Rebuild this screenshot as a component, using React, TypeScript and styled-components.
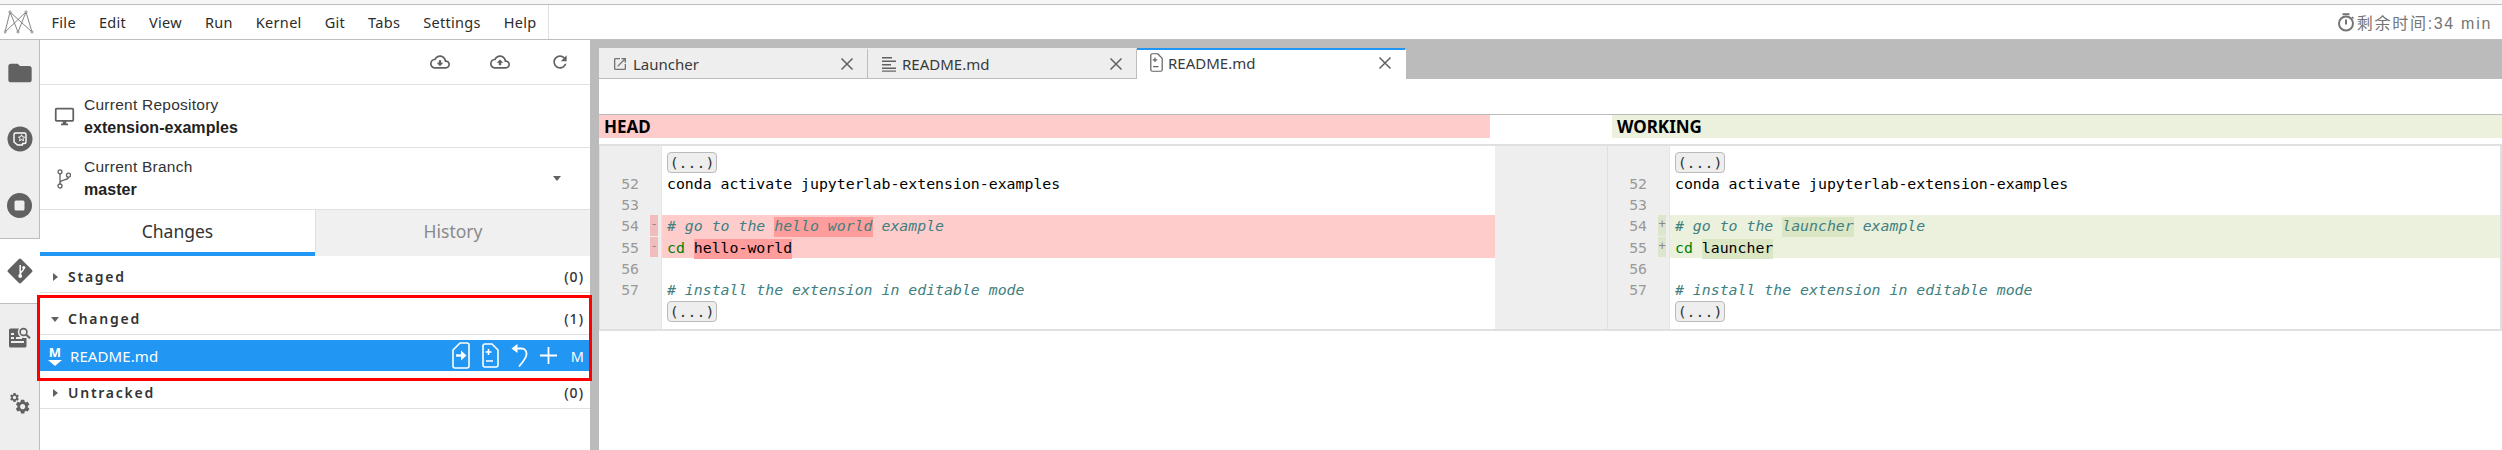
import React from 'react';
import styled, { createGlobalStyle } from 'styled-components';

const Global = createGlobalStyle`
  html, body { margin: 0; padding: 0; background: #fff; }
  #root { width: 2502px; height: 450px; overflow: hidden; }
  * { box-sizing: border-box; }
`;

const Page = styled.div`
  width: 2502px;
  height: 450px;
  display: flex;
  flex-direction: column;
  font-family: "Noto Sans", sans-serif;
  color: #333;
`;
const TopEdge = styled.div`
  height: 5px;
  background: #f6f6f6;
  border-bottom: 1px solid #bdbdbd;
`;
const MenuBar = styled.div`
  height: 35px;
  display: flex;
  align-items: stretch;
  border-bottom: 1px solid #bdbdbd;
`;
const Logo = styled.svg`
  width: 30px;
  height: 24px;
  margin: 5px 6px 0 4px;
`;
const MenuList = styled.div`
  display: flex;
  align-items: center;
  border-right: 1px solid #e0e0e0;
`;
const MenuItem = styled.div`
  padding: 0 11.5px;
  font-size: 14.5px;
  letter-spacing: 0.3px;
  color: #2c2c2c;
`;
const Timer = styled.div`
  margin-left: auto;
  padding-right: 10px;
  display: flex;
  align-items: center;
  gap: 2px;
  color: #757575;
  font-family: "Liberation Sans", "Noto Sans CJK SC", sans-serif;
  font-size: 16px;
  letter-spacing: 1.7px;
`;
const Body = styled.div`
  flex: 1;
  min-height: 0;
  display: flex;
`;
const Strip = styled.div`
  width: 40px;
  background: #eee;
  border-right: 1px solid #bdbdbd;
  display: flex;
  flex-direction: column;
`;
const StripTab = styled.div<{ $active?: boolean }>`
  height: 66px;
  display: flex;
  align-items: center;
  justify-content: center;
  color: #616161;
  ${(p) =>
    p.$active
      ? 'background:#fff;width:40px;border-top:1px solid #bdbdbd;border-bottom:1px solid #bdbdbd;'
      : ''}
`;
const Panel = styled.div`
  position: relative;
  width: 550px;
  display: flex;
  flex-direction: column;
  background: #fff;
`;
const PanelToolbar = styled.div`
  height: 45px;
  display: flex;
  align-items: flex-start;
  justify-content: flex-end;
  gap: 40px;
  padding: 12px 20px 0 0;
  border-bottom: 1px solid #e0e0e0;
  color: #616161;
`;
const InfoRow = styled.div<{ $h: number }>`
  height: ${(p) => p.$h}px;
  display: flex;
  align-items: center;
  border-bottom: 1px solid #e0e0e0;
  color: #616161;
`;
const InfoIcon = styled.div`
  width: 44px;
  display: flex;
  justify-content: center;
  padding-left: 4px;
`;
const InfoText = styled.div`
  flex: 1;
  display: flex;
  flex-direction: column;
  gap: 5px;
  font-family: "Liberation Sans", sans-serif;
`;
const InfoLabel = styled.div`
  font-size: 15.5px;
  line-height: 18px;
  letter-spacing: 0.25px;
  color: #333;
`;
const InfoValue = styled.div`
  font-size: 16px;
  line-height: 18px;
  font-weight: 700;
  letter-spacing: 0.05px;
  color: #222;
`;
const Caret = styled.div`
  width: 0;
  height: 0;
  border-left: 4px solid transparent;
  border-right: 4px solid transparent;
  border-top: 5px solid #616161;
  margin-right: 29px;
`;
const TabRow = styled.div`
  height: 46px;
  display: flex;
`;
const PanelTab = styled.div<{ $active?: boolean }>`
  width: 50%;
  display: flex;
  align-items: center;
  justify-content: center;
  font-size: 17.5px;
  background: ${(p) => (p.$active ? '#fff' : '#f0f0f0')};
  color: ${(p) => (p.$active ? '#333' : '#8a8a8a')};
  border-bottom: 4px solid ${(p) => (p.$active ? '#2196f3' : '#f0f0f0')};
  ${(p) => (p.$active ? '' : 'border-left:1px solid #e0e0e0;')}
`;
const SectionHead = styled.div<{ $h: number }>`
  height: ${(p) => p.$h}px;
  display: flex;
  align-items: flex-end;
  padding: 0 6px 5px 11px;
  border-bottom: 1px solid #e0e0e0;
  font-size: 14px;
  font-weight: 600;
  line-height: 20px;
`;
const Arrow = styled.div<{ $open?: boolean }>`
  width: 17px;
  height: 20px;
  display: flex;
  align-items: center;
  &::before {
    content: '';
    margin-left: ${(p) => (p.$open ? '0' : '2px')};
    border-style: solid;
    border-color: transparent;
    ${(p) =>
      p.$open
        ? 'border-width:5px 4px 0 4px;border-top-color:#616161;'
        : 'border-width:4px 0 4px 5px;border-left-color:#616161;'}
  }
`;
const SectionName = styled.div`
  flex: 1;
  letter-spacing: 1.75px;
  color: #333;
`;
const SectionCount = styled.div`
  font-weight: 500;
  letter-spacing: 1px;
  color: #333;
`;
const FileRow = styled.div`
  margin-top: 5px;
  height: 31px;
  background: #2196f3;
  color: #fff;
  display: flex;
  align-items: center;
  padding: 0 6px 0 8px;
`;
const FileName = styled.div`
  flex: 1;
  margin-left: 8px;
  font-size: 15px;
  letter-spacing: 0.1px;
`;
const FileActions = styled.div`
  display: flex;
  align-items: center;
  gap: 12px;
`;
const FileStatus = styled.div`
  font-size: 14.5px;
  margin-left: 2px;
`;
const RedBox = styled.div`
  position: absolute;
  left: -3px;
  top: 255px;
  width: 555px;
  height: 86px;
  border: 3px solid #f00;
  pointer-events: none;
`;
const Workspace = styled.div`
  flex: 1;
  min-width: 0;
  display: flex;
  flex-direction: column;
  background: #bbb;
  padding-left: 9px;
`;
const DockTabs = styled.div`
  height: 39px;
  padding-top: 8px;
  display: flex;
  align-items: stretch;
`;
const DockTab = styled.div<{ $active?: boolean }>`
  width: 269px;
  display: flex;
  align-items: center;
  padding: ${(p) => (p.$active ? '0 13px 3px 13px' : '0 13px 0 13px')};
  gap: 5px;
  font-size: 15px;
  background: ${(p) => (p.$active ? '#fff' : '#eee')};
  color: #333;
  border-top: 2px solid ${(p) => (p.$active ? '#2196f3' : '#eee')};
  border-right: 1px solid ${(p) => (p.$active ? '#fff' : '#bdbdbd')};
  border-bottom: 1px solid ${(p) => (p.$active ? '#fff' : '#bdbdbd')};
`;
const DockLabel = styled.div`
  flex: 1;
  color: #3a3a3a;
`;
const DiffArea = styled.div`
  flex: 1;
  background: #fff;
  padding-top: 35px;
  min-height: 0;
`;
const DiffHeads = styled.div`
  height: 24px;
  display: flex;
  justify-content: space-between;
  border-top: 1px solid #bbb;
`;
const DiffHead = styled.div<{ $kind: 'old' | 'new'; $w: number }>`
  width: ${(p) => p.$w}px;
  background: ${(p) => (p.$kind === 'old' ? '#ffcccc' : '#ebf1dd')};
  font-size: 17px;
  font-weight: 700;
  color: #000;
  line-height: 23px;
  padding-left: 5px;
`;
const DiffBody = styled.div`
  margin-top: 6px;
  height: 187px;
  display: flex;
  border: 1px solid #e0e0e0;
  border-width: 2px 2px 2px 1px;
`;
const Pane = styled.div<{ $w?: number }>`
  width: ${(p) => (p.$w ? `${p.$w}px` : 'auto')};
  flex: ${(p) => (p.$w ? '0 0 auto' : '1')};
  display: flex;
  flex-direction: column;
  min-width: 0;
`;
const Spacer = styled.div`
  width: 113px;
  background: #eee;
  border-right: 1px solid #e0e0e0;
`;
const Line = styled.div<{ $h: number }>`
  height: ${(p) => p.$h}px;
  display: flex;
`;
const Gutter = styled.div`
  width: 62px;
  flex: none;
  background: #eee;
  border-right: 1px solid #e6e6e6;
  display: flex;
`;
const LineNo = styled.div`
  width: 39px;
  padding-top: 1px;
  text-align: right;
  font-family: "DejaVu Sans Mono", monospace;
  font-size: 14.85px;
  line-height: 21px;
  color: #999;
`;
const Marker = styled.div<{ $kind: 'old' | 'new' }>`
  margin: 0 0 1px 11px;
  width: 8px;
  background: ${(p) => (p.$kind === 'old' ? '#f0bcbc' : '#dde5cd')};
  font-family: "DejaVu Sans Mono", monospace;
  font-size: 12px;
  line-height: 19px;
  color: #888;
  text-align: center;
  overflow: hidden;
`;
const Code = styled.div<{ $kind?: 'old' | 'new' }>`
  flex: 1;
  min-width: 0;
  padding-left: 5px;
  font-family: "DejaVu Sans Mono", monospace;
  font-size: 14.85px;
  line-height: 21px;
  white-space: pre;
  color: #000;
  background: ${(p) => (p.$kind === 'old' ? '#ffcccc' : p.$kind === 'new' ? '#ebf1dd' : 'transparent')};
`;
const CodeText = styled.div`
  padding-top: 1px;
`;
const Comment = styled.span`
  font-style: italic;
  color: #408080;
`;
const Builtin = styled.span`
  color: #008000;
`;
const Mark = styled.span<{ $kind: 'old' | 'new' }>`
  display: inline-block;
  height: 20px;
  line-height: 19px;
  background: ${(p) => (p.$kind === 'old' ? '#ff9d9d' : '#dbe6c5')};
`;
const Fold = styled.button<{ $top: number }>`
  display: block;
  margin-top: ${(p) => p.$top}px;
  width: 50px;
  height: 21px;
  padding: 0;
  border: 1px solid #bbb;
  border-radius: 4px;
  background: #eee;
  font-family: "DejaVu Sans Mono", monospace;
  font-size: 14.85px;
  line-height: 18px;
  color: #333;
`;
const MarkdownGlyph = styled.svg`
  overflow: visible;
  flex: none;
`;

const Ic = ({ d, size = 20, color = 'currentColor' }: { d: string; size?: number; color?: string }) => (
  <svg width={size} height={size} viewBox="0 0 24 24" fill={color}>
    <path d={d} />
  </svg>
);

const gearPath =
  'M19.14 12.94c.04-.3.06-.61.06-.94 0-.32-.02-.64-.07-.94l2.03-1.58c.18-.14.23-.41.12-.61l-1.92-3.32c-.12-.22-.37-.29-.59-.22l-2.39.96c-.5-.38-1.03-.7-1.62-.94l-.36-2.54c-.04-.24-.24-.41-.48-.41h-3.84c-.24 0-.43.17-.47.41l-.36 2.54c-.59.24-1.13.57-1.62.94l-2.39-.96c-.22-.08-.47 0-.59.22L2.74 8.87c-.12.21-.08.47.12.61l2.03 1.58c-.05.3-.09.63-.09.94s.02.64.07.94l-2.03 1.58c-.18.14-.23.41-.12.61l1.92 3.32c.12.22.37.29.59.22l2.39-.96c.5.38 1.03.7 1.62.94l.36 2.54c.05.24.24.41.48.41h3.84c.24 0 .44-.17.47-.41l.36-2.54c.59-.24 1.13-.56 1.62-.94l2.39.96c.22.08.47 0 .59-.22l1.92-3.32c.12-.22.07-.47-.12-.61l-2.01-1.58zM12 15.6c-1.98 0-3.6-1.62-3.6-3.6s1.62-3.6 3.6-3.6 3.6 1.62 3.6 3.6-1.62 3.6-3.6 3.6z';
const cloudBase =
  'M19.35 10.04C18.67 6.59 15.64 4 12 4 9.11 4 6.6 5.64 5.35 8.04 2.34 8.36 0 10.91 0 14c0 3.31 2.69 6 6 6h13c2.76 0 5-2.24 5-5 0-2.64-2.05-4.78-4.65-4.96zM19 18H6c-2.21 0-4-1.79-4-4 0-2.05 1.53-3.76 3.56-3.97l1.07-.11.5-.95C8.08 7.14 9.94 6 12 6c2.62 0 4.88 1.86 5.39 4.43l.3 1.5 1.53.11c1.56.1 2.78 1.41 2.78 2.96 0 1.65-1.35 3-3 3z';

const JupyterMesh = () => {
  const nodes = [[6, 2], [22, 2], [1, 22], [14, 22], [28, 22]];
  const edges = [[0, 2], [0, 3], [0, 4], [1, 2], [1, 3], [1, 4]];
  return (
    <Logo viewBox="0 0 30 24">
      {edges.map(([a, b]) => (
        <line key={`${a}${b}`} x1={nodes[a][0]} y1={nodes[a][1]} x2={nodes[b][0]} y2={nodes[b][1]} stroke="#777" strokeWidth="0.9" />
      ))}
      {nodes.map(([x, y]) => (
        <circle key={`${x}${y}`} cx={x} cy={y} r="1.1" fill="#fff" stroke="#777" strokeWidth="0.8" />
      ))}
    </Logo>
  );
};

const ExtensionIcon = () => (
  <svg width="26" height="26" viewBox="0 0 26 26">
    <circle cx="13" cy="13" r="12.5" fill="#616161" />
    <path d="M7 8.5a1.5 1.5 0 0 1 1.5-1.5h9a1.5 1.5 0 0 1 1.5 1.5v7.5a1.5 1.5 0 0 1-1.5 1.5h-2v1.5h-5l-3.5-3z" fill="none" stroke="#fff" strokeWidth="1.4" strokeLinejoin="round" />
    <path d="M14.5 8.8l1 2 2.1.3-1.5 1.5.4 2.1-2-1-1.9 1 .4-2.1-1.5-1.5 2.1-.3z" fill="none" stroke="#fff" strokeWidth="1" />
  </svg>
);
const StopIcon = () => (
  <svg width="25" height="25" viewBox="0 0 25 25">
    <circle cx="12.5" cy="12.5" r="12.5" fill="#616161" />
    <rect x="7.5" y="7.5" width="10" height="10" rx="1.5" fill="#eee" />
  </svg>
);
const GitDiamond = () => (
  <svg width="26" height="26" viewBox="0 0 26 26">
    <path d="M1.2 11.7L11.7 1.2a1.8 1.8 0 0 1 2.6 0l10.5 10.5a1.8 1.8 0 0 1 0 2.6L14.3 24.8a1.8 1.8 0 0 1-2.6 0L1.2 14.3a1.8 1.8 0 0 1 0-2.6z" fill="#616161" />
    <path d="M13.2 7v10M13.2 16c0-2.5 3.6-2.2 3.6-6" stroke="#fff" strokeWidth="1.5" fill="none" />
    <circle cx="13.2" cy="18" r="1.9" fill="#fff" />
    <circle cx="16.8" cy="9.5" r="1.6" fill="#fff" />
  </svg>
);
const InspectorIcon = () => (
  <svg width="22" height="21" viewBox="0 0 22 21" fill="#616161">
    <path d="M0 3a1.5 1.5 0 0 1 1.5-1.5H10A6 6 0 0 0 15 11h2.5v8a1.5 1.5 0 0 1-1.5 1.5H1.5A1.5 1.5 0 0 1 0 19z" />
    <rect x="2" y="6" width="3" height="2" fill="#eee" />
    <rect x="2" y="10" width="3" height="2" fill="#eee" />
    <rect x="2" y="14" width="13" height="2" fill="#eee" />
    <rect x="7" y="10" width="6" height="2" fill="#eee" />
    <circle cx="14.5" cy="5" r="3.4" fill="none" stroke="#616161" strokeWidth="1.6" />
    <path d="M17 7.5l4 3.8" stroke="#616161" strokeWidth="2" />
  </svg>
);
const GearsIcon = () => (
  <svg width="22" height="23" viewBox="0 0 22 23" fill="#616161">
    <g transform="translate(0 0) scale(0.46)"><path d={gearPath} /></g>
    <g transform="translate(5 6) scale(0.72)"><path d={gearPath} /></g>
  </svg>
);
const BranchIcon = () => (
  <svg width="14" height="20" viewBox="0 0 14 20" fill="none" stroke="#616161" strokeWidth="1.3">
    <circle cx="3" cy="2.8" r="2" />
    <circle cx="3" cy="17" r="2" />
    <circle cx="11.5" cy="6.2" r="2" />
    <path d="M3 5v10M3 14c0-3.5 8.5-2.5 8.5-5.8" />
  </svg>
);
const LauncherTab = () => (
  <Ic size={16} color="#757575" d="M19 19H5V5h7V3H5a2 2 0 00-2 2v14a2 2 0 002 2h14c1.1 0 2-.9 2-2v-7h-2v7zM14 3v2h3.59l-9.83 9.83 1.41 1.41L19 6.41V10h2V3h-7z" />
);
const LinesTab = () => (
  <svg width="16" height="16" viewBox="0 0 16 16" fill="#616161">
    <rect x="1" y="1" width="10" height="1.5" />
    <rect x="1" y="4.5" width="14" height="1.5" />
    <rect x="1" y="8" width="9" height="1.5" />
    <rect x="1" y="11.5" width="14" height="1.5" />
    <rect x="1" y="14.5" width="14" height="1.2" />
  </svg>
);
const CloseX = () => (
  <svg width="14" height="14" viewBox="0 0 14 14" stroke="#616161" strokeWidth="1.5">
    <path d="M1.5 1.5l11 11M12.5 1.5l-11 11" />
  </svg>
);
const DiffFile = ({ c = '#fff', w = 17, h = 25 }: { c?: string; w?: number; h?: number }) => (
  <svg width={w} height={h} viewBox="0 0 17 25" fill="none" stroke={c} strokeWidth="1.6">
    <path d="M1 3a2 2 0 0 1 2-2h7l6 6v15a2 2 0 0 1-2 2H3a2 2 0 0 1-2-2z" strokeLinejoin="round" />
    <path d="M6.5 6v6M3.5 9h6M4 18h7" />
  </svg>
);
const OpenFile = () => (
  <svg width="18" height="27" viewBox="0 0 18 27" fill="none" stroke="#fff" strokeWidth="1.6">
    <path d="M1 8l7-7h7a2 2 0 0 1 2 2v21a2 2 0 0 1-2 2H3a2 2 0 0 1-2-2z" strokeLinejoin="round" />
    <path d="M4 13.5h6" strokeWidth="2.4" />
    <path d="M9 8.5l5.5 5-5.5 5z" fill="#fff" stroke="none" />
  </svg>
);
const UndoIcon = () => (
  <svg width="17" height="26" viewBox="0 0 17 26" fill="none" stroke="#fff" strokeWidth="1.8">
    <path d="M3 5.5h7.5c3.5 0 5.3 2.6 5 6-.4 4-4.5 8.5-7.5 12" />
    <path d="M0.5 5.5l6-4.5v9z" fill="#fff" stroke="none" />
  </svg>
);
const PlusIcon = () => (
  <svg width="17" height="17" viewBox="0 0 17 17" stroke="#fff" strokeWidth="1.8">
    <path d="M8.5 0v17M0 8.5h17" />
  </svg>
);
const MarkdownIcon = () => (
  <MarkdownGlyph width="14" height="24" viewBox="0 0 14 24">
    <text x="7" y="13" textAnchor="middle" fontFamily="Noto Sans" fontSize="13" fontWeight="700" fill="#fff">M</text>
    <path d="M0 16h14l-7 6z" fill="#fff" />
  </MarkdownGlyph>
);
const StopwatchIcon = () => (
  <svg width="18" height="19" viewBox="0 0 18 19" fill="none" stroke="#757575">
    <path d="M5.5 1.2h7" strokeWidth="2" />
    <circle cx="9" cy="10.5" r="7" strokeWidth="2" />
    <path d="M9 6.5v5" strokeWidth="2" />
    <path d="M15 4l1.5 1.5" strokeWidth="1.6" />
  </svg>
);

const menu = ['File', 'Edit', 'View', 'Run', 'Kernel', 'Git', 'Tabs', 'Settings', 'Help'];

type Kind = 'old' | 'new';
const lines = (kind: Kind, word: string, cmd: string) => [
  { n: 52, h: 21, body: <>conda activate jupyterlab-extension-examples</> },
  { n: 53, h: 21, body: null },
  {
    n: 54,
    h: 22,
    changed: true,
    body: (
      <Comment>
        # go to the <Mark $kind={kind}>{word}</Mark> example
      </Comment>
    ),
  },
  {
    n: 55,
    h: 21,
    changed: true,
    body: (
      <>
        <Builtin>cd</Builtin> <Mark $kind={kind}>{cmd}</Mark>
      </>
    ),
  },
  { n: 56, h: 21, body: null },
  { n: 57, h: 21, body: <Comment># install the extension in editable mode</Comment> },
];

const DiffPane = ({ kind, width }: { kind: Kind; width?: number }) => (
  <Pane $w={width}>
    <Line $h={28}>
      <Gutter />
      <Code>
        <Fold $top={6}>(...)</Fold>
      </Code>
    </Line>
    {lines(kind, kind === 'old' ? 'hello world' : 'launcher', kind === 'old' ? 'hello-world' : 'launcher').map((l) => (
      <Line key={l.n} $h={l.h}>
        <Gutter>
          <LineNo>{l.n}</LineNo>
          {l.changed && <Marker $kind={kind}>{kind === 'old' ? '-' : '+'}</Marker>}
        </Gutter>
        <Code $kind={l.changed ? kind : undefined}>
          <CodeText>{l.body}</CodeText>
        </Code>
      </Line>
    ))}
    <Line $h={30}>
      <Gutter />
      <Code>
        <Fold $top={1}>(...)</Fold>
      </Code>
    </Line>
  </Pane>
);

export default function App() {
  return (
    <Page>
      <Global />
      <TopEdge />
      <MenuBar>
        <JupyterMesh />
        <MenuList>
          {menu.map((m) => (
            <MenuItem key={m}>{m}</MenuItem>
          ))}
        </MenuList>
        <Timer>
          <StopwatchIcon />
          剩余时间:34 min
        </Timer>
      </MenuBar>
      <Body>
        <Strip>
          <StripTab>
            <Ic size={28} d="M10 4H4c-1.1 0-1.99.9-1.99 2L2 18c0 1.1.9 2 2 2h16c1.1 0 2-.9 2-2V8c0-1.1-.9-2-2-2h-8l-2-2z" />
          </StripTab>
          <StripTab><ExtensionIcon /></StripTab>
          <StripTab><StopIcon /></StripTab>
          <StripTab $active><GitDiamond /></StripTab>
          <StripTab><InspectorIcon /></StripTab>
          <StripTab><GearsIcon /></StripTab>
        </Strip>
        <Panel>
          <PanelToolbar>
            <Ic d={`${cloudBase}m-5.55-8h-2.9v3H8l4 4 4-4h-2.55z`} />
            <Ic d={`${cloudBase}M8 13h2.55v3h2.9v-3H16l-4-4z`} />
            <Ic d="M17.65 6.35C16.2 4.9 14.21 4 12 4c-4.42 0-7.99 3.58-7.99 8s3.57 8 7.99 8c3.73 0 6.84-2.55 7.73-6h-2.08c-.82 2.33-3.04 4-5.65 4-3.31 0-6-2.69-6-6s2.69-6 6-6c1.66 0 3.14.69 4.22 1.78L13 11h7V4l-2.35 2.35z" />
          </PanelToolbar>
          <InfoRow $h={63}>
            <InfoIcon>
              <Ic size={21} d="M21 2H3c-1.1 0-2 .9-2 2v12c0 1.1.9 2 2 2h7v2H8v2h8v-2h-2v-2h7c1.1 0 2-.9 2-2V4c0-1.1-.9-2-2-2zm0 14H3V4h18v12z" />
            </InfoIcon>
            <InfoText>
              <InfoLabel>Current Repository</InfoLabel>
              <InfoValue>extension-examples</InfoValue>
            </InfoText>
          </InfoRow>
          <InfoRow $h={62}>
            <InfoIcon><BranchIcon /></InfoIcon>
            <InfoText>
              <InfoLabel>Current Branch</InfoLabel>
              <InfoValue>master</InfoValue>
            </InfoText>
            <Caret />
          </InfoRow>
          <TabRow>
            <PanelTab $active>Changes</PanelTab>
            <PanelTab>History</PanelTab>
          </TabRow>
          <SectionHead $h={37}>
            <Arrow />
            <SectionName>Staged</SectionName>
            <SectionCount>(0)</SectionCount>
          </SectionHead>
          <SectionHead $h={42}>
            <Arrow $open />
            <SectionName>Changed</SectionName>
            <SectionCount>(1)</SectionCount>
          </SectionHead>
          <FileRow>
            <MarkdownIcon />
            <FileName>README.md</FileName>
            <FileActions>
              <OpenFile />
              <DiffFile />
              <UndoIcon />
              <PlusIcon />
              <FileStatus>M</FileStatus>
            </FileActions>
          </FileRow>
          <SectionHead $h={38}>
            <Arrow />
            <SectionName>Untracked</SectionName>
            <SectionCount>(0)</SectionCount>
          </SectionHead>
          <RedBox />
        </Panel>
        <Workspace>
          <DockTabs>
            <DockTab>
              <LauncherTab />
              <DockLabel>Launcher</DockLabel>
              <CloseX />
            </DockTab>
            <DockTab>
              <LinesTab />
              <DockLabel>README.md</DockLabel>
              <CloseX />
            </DockTab>
            <DockTab $active>
              <DiffFile c="#616161" w={13} h={19} />
              <DockLabel>README.md</DockLabel>
              <CloseX />
            </DockTab>
          </DockTabs>
          <DiffArea>
            <DiffHeads>
              <DiffHead $kind="old" $w={891}>HEAD</DiffHead>
              <DiffHead $kind="new" $w={890}>WORKING</DiffHead>
            </DiffHeads>
            <DiffBody>
              <DiffPane kind="old" width={895} />
              <Spacer />
              <DiffPane kind="new" />
            </DiffBody>
          </DiffArea>
        </Workspace>
      </Body>
    </Page>
  );
}
